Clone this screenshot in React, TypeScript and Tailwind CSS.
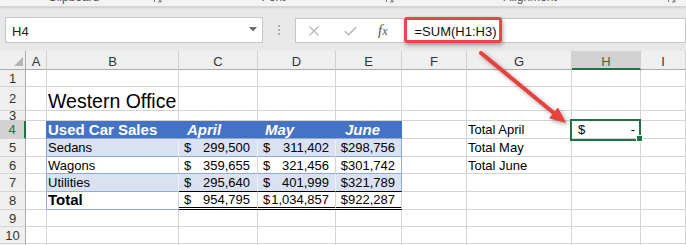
import React from "react";

type CellDef = { c: string; v?: React.ReactNode };

const GL = "border-r border-b border-r-[#d4d4d4] border-b-[#d4d4d4]";
const TXT = "flex items-center whitespace-nowrap text-[13px] leading-[15px]";
const RH =
  "bg-[#efefef] border-r border-b border-r-[#ababab] border-b-[#d4d4d4] flex items-center justify-center text-[13px] leading-[15px] text-[#333]";
const RH_SEL =
  "bg-[#d2d2d2] border-r-2 border-b border-r-[#217346] border-b-[#d4d4d4] flex items-center justify-center text-[13px] leading-[15px] text-[#217346]";
const CH =
  "bg-[#efefef] border-r border-b border-r-[#d0d0d0] border-b-[#ababab] flex items-center justify-center pt-[3px] text-[13px] leading-[15px] text-[#333]";
const CH_SEL =
  "bg-[#d2d2d2] border-r border-b-2 border-r-[#d0d0d0] border-b-[#217346] flex items-center justify-center pt-[3px] text-[13px] leading-[15px] text-[#217346]";

const HDR =
  "bg-[#4472c4] border-r border-b border-r-[#4472c4] border-b-[#8ea9db] flex items-center whitespace-nowrap text-white font-bold text-[15px] leading-[17px]";

function Money({ v }: { v: string }) {
  return (
    <>
      <span>$</span>
      <span>{v}</span>
    </>
  );
}

const empty = (n: number): CellDef[] => Array.from({ length: n }, () => ({ c: GL }));

function buildRows(): { label: string; sel?: boolean; cells: CellDef[] }[] {
  return [
    { label: "1", cells: empty(9) },
    {
      label: "2",
      cells: [
        { c: GL },
        {
          c: GL + " flex items-end whitespace-nowrap text-[19.5px] leading-[18px] pl-[1px]",
          v: "Western Office",
        },
        ...empty(7),
      ],
    },
    { label: "3", cells: empty(9) },
    {
      label: "4",
      sel: true,
      cells: [
        { c: "border-r border-b border-r-[#4472c4] border-b-[#d4d4d4]" },
        { c: HDR + " pl-[1px]", v: "Used Car Sales" },
        { c: HDR + " italic pl-[8px]", v: "April" },
        { c: HDR + " italic pl-[7px]", v: "May" },
        { c: HDR + " italic pl-[9px]", v: "June" },
        { c: GL },
        { c: GL + " " + TXT + " pl-[1px]", v: "Total April" },
        {
          c: GL + " " + TXT + " justify-between pl-[6px] pr-[5px]",
          v: (
            <>
              <span>$</span>
              <span>-</span>
            </>
          ),
        },
        { c: GL },
      ],
    },
    {
      label: "5",
      cells: [
        { c: "border-r border-b border-r-[#8ea9db] border-b-[#d4d4d4]" },
        {
          c: "bg-[#d9e1f2] border-r border-b border-r-[#eef1f8] border-b-[#8ea9db] pl-[1px] " + TXT,
          v: "Sedans",
        },
        {
          c: "bg-[#d9e1f2] border-r border-b border-r-[#eef1f8] border-b-[#8ea9db] pl-[5px] pr-[7px] justify-between " + TXT,
          v: <Money v="299,500" />,
        },
        {
          c: "bg-[#d9e1f2] border-r border-b border-r-[#eef1f8] border-b-[#8ea9db] pl-[5px] pr-[6px] justify-between " + TXT,
          v: <Money v="311,402" />,
        },
        {
          c: "bg-[#d9e1f2] border-r border-b border-r-[#8ea9db] border-b-[#8ea9db] pr-[6px] justify-end " + TXT,
          v: "$298,756",
        },
        { c: GL },
        { c: GL + " " + TXT + " pl-[1px]", v: "Total May" },
        ...empty(2),
      ],
    },
    {
      label: "6",
      cells: [
        { c: "border-r border-b border-r-[#8ea9db] border-b-[#d4d4d4]" },
        {
          c: "border-r border-b border-r-[#d4d4d4] border-b-[#8ea9db] pl-[1px] " + TXT,
          v: "Wagons",
        },
        {
          c: "border-r border-b border-r-[#d4d4d4] border-b-[#8ea9db] pl-[5px] pr-[7px] justify-between " + TXT,
          v: <Money v="359,655" />,
        },
        {
          c: "border-r border-b border-r-[#d4d4d4] border-b-[#8ea9db] pl-[5px] pr-[6px] justify-between " + TXT,
          v: <Money v="321,456" />,
        },
        {
          c: "border-r border-b border-r-[#8ea9db] border-b-[#8ea9db] pr-[6px] justify-end " + TXT,
          v: "$301,742",
        },
        { c: GL },
        { c: GL + " " + TXT + " pl-[1px]", v: "Total June" },
        ...empty(2),
      ],
    },
    {
      label: "7",
      cells: [
        { c: "border-r border-b border-r-[#8ea9db] border-b-[#d4d4d4]" },
        {
          c: "bg-[#d9e1f2] border-r border-b border-r-[#eef1f8] border-b-[#8ea9db] pl-[1px] " + TXT,
          v: "Utilities",
        },
        {
          c: "bg-[#d9e1f2] border-r border-b border-r-[#eef1f8] border-b-black pl-[5px] pr-[7px] justify-between " + TXT,
          v: <Money v="295,640" />,
        },
        {
          c: "bg-[#d9e1f2] border-r border-b border-r-[#eef1f8] border-b-black pl-[5px] pr-[6px] justify-between " + TXT,
          v: <Money v="401,999" />,
        },
        {
          c: "bg-[#d9e1f2] border-r border-b border-r-[#8ea9db] border-b-black pr-[6px] justify-end " + TXT,
          v: "$321,789",
        },
        ...empty(4),
      ],
    },
    {
      label: "8",
      cells: [
        { c: "border-r border-b border-r-[#8ea9db] border-b-[#d4d4d4]" },
        {
          c: "border-r border-b border-r-[#d4d4d4] border-b-[#8ea9db] pl-[1px] pb-[3px] flex items-center whitespace-nowrap font-bold text-[15px] leading-[17px]",
          v: "Total",
        },
        {
          c: "border-r border-b-[3px] border-double border-r-[#d4d4d4] border-b-black pl-[5px] pr-[7px] justify-between " + TXT,
          v: <Money v="954,795" />,
        },
        {
          c: "border-r border-b-[3px] border-double border-r-[#d4d4d4] border-b-black pl-[5px] pr-[6px] justify-between " + TXT,
          v: <Money v="1,034,857" />,
        },
        {
          c: "border-r border-b-[3px] border-double border-r-[#d4d4d4] border-b-black pr-[6px] justify-end " + TXT,
          v: "$922,287",
        },
        ...empty(4),
      ],
    },
    { label: "9", cells: empty(9) },
    { label: "10", cells: empty(9) },
    { label: "11", cells: empty(9) },
  ];
}

function Launcher({ className }: { className: string }) {
  return (
    <svg className={className} width="8" height="8" viewBox="0 0 8 8">
      <path d="M0.5 7V0.5H7" fill="none" stroke="#7a7a7a" strokeWidth="1" />
      <path d="M2.5 2.5L7 7M7 4v3H4" fill="none" stroke="#7a7a7a" strokeWidth="1" />
    </svg>
  );
}

function RibbonStrip() {
  return (
    <div className="relative z-10 h-[7px] overflow-hidden border-b border-b-[#d6d6d6] bg-[#f3f3f3] shadow-[0_1px_2px_rgba(0,0,0,0.12)]">
      <div className="-mt-[10px] flex items-start text-[12px] leading-[14px] text-[#555]">
        <span className="ml-[48px]">Clipboard</span>
        <Launcher className="ml-[55px] mt-[5px]" />
        <span className="ml-[99px]">Font</span>
        <Launcher className="ml-[101px] mt-[5px]" />
        <span className="ml-[109px]">Alignment</span>
        <Launcher className="ml-[111px] mt-[5px]" />
      </div>
    </div>
  );
}

function FormulaBar() {
  return (
    <div className="flex h-[44px] items-start bg-[#e8e8e8] pt-[10px]">
      <div className="ml-[5px] flex h-[26px] w-[258px] items-center border border-[#c6c6c6] bg-white pl-[6px] pr-[5px] pt-[2px] text-[13px] leading-[15px] text-[#222]">
        <span className="flex-1">H4</span>
        <svg width="8" height="5" viewBox="0 0 8 5" className="-mt-[3px]">
          <path d="M0 0H8L4 4.5Z" fill="#6a6a6a" />
        </svg>
      </div>
      <div className="flex h-[26px] w-[32px] flex-col items-center justify-center gap-[2px]">
        <div className="h-[2px] w-[2px] bg-[#b0b0b0]" />
        <div className="h-[2px] w-[2px] bg-[#b0b0b0]" />
        <div className="h-[2px] w-[2px] bg-[#b0b0b0]" />
      </div>
      <div className="mt-[1px] flex h-[25px] flex-1 items-center border border-[#c6c6c6] bg-white">
        <svg className="ml-[13px]" width="10" height="10" viewBox="0 0 10 10">
          <path d="M0.5 0.5L9.5 9.5M9.5 0.5L0.5 9.5" stroke="#b5b5b5" strokeWidth="1.3" />
        </svg>
        <svg className="ml-[25px]" width="13" height="10" viewBox="0 0 13 10">
          <path d="M0.7 5L4.5 8.8L12.3 1" fill="none" stroke="#b5b5b5" strokeWidth="1.4" />
        </svg>
        <span className="ml-[21px] font-['Liberation_Serif',serif] text-[15px] italic leading-[15px] text-[#555]">
          f<span className="text-[12px]">x</span>
        </span>
        <span className="ml-[27px] pt-[1px] text-[13px] leading-[15px] text-[#111]">=SUM(H1:H3)</span>
      </div>
    </div>
  );
}

function Sheet() {
  const rows = buildRows();
  const cols = ["A", "B", "C", "D", "E", "F", "G", "H", "I"];
  return (
    <div className="grid h-[194px] grid-cols-[26px_21px_132px_79px_78px_66px_65px_105px_69px_1fr] grid-rows-[19px_17px_24px_10px_18px_18px_17px_18px_18px_17px_17px_1fr]">
      <div className="flex items-end justify-end border-r border-b border-r-[#ababab] border-b-[#ababab] bg-[#efefef] pb-[3px] pr-[2px]">
        <svg width="9" height="9" viewBox="0 0 9 9">
          <path d="M9 0V9H0Z" fill="#b4b4b4" />
        </svg>
      </div>
      {cols.map((c) => (
        <div key={c} className={c === "H" ? CH_SEL : CH}>
          {c}
        </div>
      ))}
      {rows.map((r) => (
        <React.Fragment key={r.label}>
          <div className={r.sel ? RH_SEL : RH}>{r.label}</div>
          {r.cells.map((cell, i) => (
            <div key={i} className={cell.c}>
              {cell.v}
            </div>
          ))}
        </React.Fragment>
      ))}
    </div>
  );
}

export default function App() {
  return (
    <div className="relative h-[245px] w-[686px] overflow-hidden bg-white font-['Liberation_Sans',Arial,sans-serif] text-black">
      <RibbonStrip />
      <FormulaBar />
      <Sheet />
      {/* red annotation box around formula */}
      <div className="pointer-events-none absolute left-[404px] top-[17px] h-[26px] w-[98px] rounded-[3px] border-[3px] border-[#e8464a] shadow-[1px_2px_4px_rgba(0,0,0,0.35)]" />
      {/* red arrow */}
      <svg
        className="pointer-events-none absolute left-0 top-0 drop-shadow-[2px_2px_2px_rgba(0,0,0,0.35)]"
        width="686"
        height="245"
        viewBox="0 0 686 245"
      >
        <line x1="481" y1="53" x2="555" y2="114" stroke="#e8413e" strokeWidth="4" strokeLinecap="round" />
        <polygon points="566,123 549,118.3 558,107.5" fill="#e8413e" />
      </svg>
      {/* selection box H4 */}
      <div className="pointer-events-none absolute left-[570px] top-[119px] h-[22px] w-[71px] border-2 border-[#217346]" />
      <div className="pointer-events-none absolute left-[636px] top-[135px] h-[7px] w-[7px] border border-white bg-[#217346]" />
    </div>
  );
}
